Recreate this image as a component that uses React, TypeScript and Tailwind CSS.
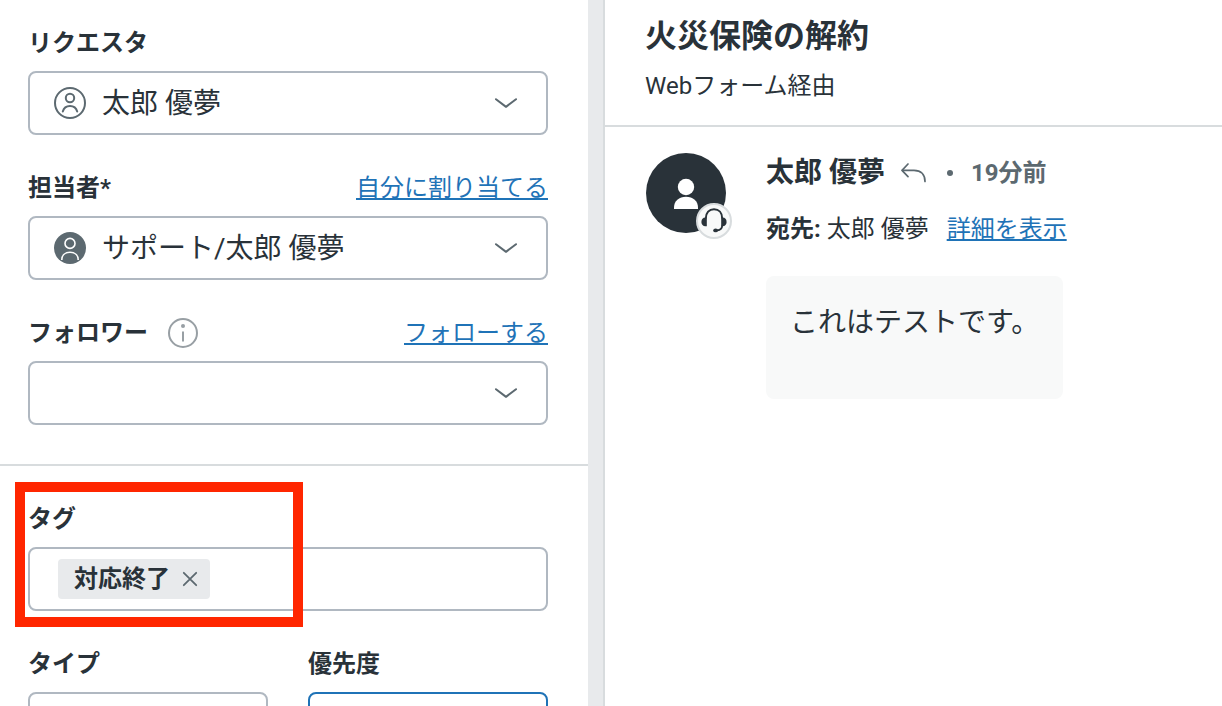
import React from "react";

const ChevronIcon = () => (
  <svg
    className="absolute right-7.5 top-1/2 h-3 w-6 -translate-y-1/2 pointer-events-none"
    viewBox="0 0 24 12"
    fill="none"
    stroke="#5c6970"
    strokeWidth="2"
    strokeLinecap="round"
    strokeLinejoin="round"
  >
    <path d="M2 2.2 L11.4 9.4 Q12 9.9 12.6 9.4 L22 2.2" />
  </svg>
);

const UserOutlineIcon = () => (
  <svg className="w-8 h-8" viewBox="0 0 32 32" fill="none" stroke="#5c6970" strokeWidth="2">
    <circle cx="16" cy="16" r="15" />
    <circle cx="16" cy="11" r="4.2" />
    <path d="M8.8 24.6 C9.8 20.8 12.6 19 16 19 C19.4 19 22.2 20.8 23.2 24.6" strokeLinecap="round" />
  </svg>
);

const UserFilledIcon = () => (
  <svg className="w-8 h-8" viewBox="0 0 32 32" fill="none" stroke="#ffffff" strokeWidth="1.6">
    <circle cx="16" cy="16" r="16" fill="#5c6970" stroke="none" />
    <circle cx="16" cy="11.4" r="5" />
    <path d="M7.8 28 C7.8 23 11.4 20.2 16 20.2 C20.6 20.2 24.2 23 24.2 28" />
  </svg>
);

const InfoIcon = () => (
  <svg className="w-[30px] h-[30px]" viewBox="0 0 30 30" fill="none" stroke="#989fa4" strokeWidth="2">
    <circle cx="15" cy="15" r="14" />
    <path d="M15 13.5 V23.5" />
    <circle cx="15" cy="8" r="2" fill="#989fa4" stroke="none" />
  </svg>
);

const HeadsetIcon = () => (
  <svg className="w-8 h-8" viewBox="0 0 32 32" fill="none" stroke="#293239" strokeWidth="2">
    <path d="M7.8 13.5 C7.8 7.6 11.2 4.2 16 4.2 C20.8 4.2 24.2 7.6 24.2 13.5" />
    <path d="M8.8 12.6 V21.2 H7.4 C5 21.2 3.4 19.4 3.4 16.9 C3.4 14.4 5 12.6 7.4 12.6 Z" fill="#293239" stroke="none" />
    <path d="M23.2 12.6 V21.2 H24.6 C27 21.2 28.6 19.4 28.6 16.9 C28.6 14.4 27 12.6 24.6 12.6 Z" fill="#293239" stroke="none" />
    <path d="M24.2 20.5 C24.2 23.8 21.5 25.4 18 25.4" strokeWidth="1.8" />
    <ellipse cx="17.6" cy="25.4" rx="2.4" ry="1.9" fill="#293239" stroke="none" />
  </svg>
);

interface FieldProps {
  id: string;
  label: string;
  value?: string;
  icon?: React.ReactNode;
  info?: boolean;
  action?: string;
  active?: boolean;
}

const ActionLink = ({ text }: { text: string }) => (
  <a
    href="#"
    className="text-2xl leading-10 text-[#1f73b7] underline decoration-2 underline-offset-2 [text-decoration-skip-ink:none]"
  >
    {text}
  </a>
);

const SelectField = ({ id, label, value, icon, info, action, active }: FieldProps) => (
  <div className="flex flex-col gap-y-2">
    <div className="flex items-center justify-between h-10">
      <div className="flex items-center gap-x-5">
        <label htmlFor={id} className="text-2xl font-bold leading-10">
          {label}
        </label>
        {info && (
          <button type="button" aria-label={label}>
            <InfoIcon />
          </button>
        )}
      </div>
      {action && <ActionLink text={action} />}
    </div>
    <div className="relative">
      {icon && (
        <span className="absolute left-[26px] top-1/2 -translate-y-1/2 pointer-events-none">{icon}</span>
      )}
      <select
        id={id}
        className={
          active
            ? "block w-full h-16 appearance-none rounded-lg border-2 border-[#1f73b7] bg-white pl-[72px] pr-16 pt-0.5 text-[28px]"
            : "block w-full h-16 appearance-none rounded-lg border-2 border-[#b0b8c1] bg-white pl-[72px] pr-16 pt-0.5 text-[28px]"
        }
      >
        <option>{value}</option>
      </select>
      <ChevronIcon />
    </div>
  </div>
);

const TagField = () => (
  <div className="relative flex flex-col gap-y-2">
    <div className="flex items-center h-10">
      <label htmlFor="tags" className="text-2xl font-bold leading-10">
        タグ
      </label>
    </div>
    <div className="flex items-center h-16 rounded-lg border-2 border-[#b0b8c1] bg-white px-7">
      <span className="flex items-center h-10 gap-x-3 rounded bg-[#e8eaec] pl-4 pr-3">
        <span className="text-2xl font-bold leading-10 whitespace-nowrap">対応終了</span>
        <button type="button" aria-label="対応終了">
          <svg className="w-4 h-4" viewBox="0 0 16 16" fill="none" stroke="#5c6970" strokeWidth="1.8" strokeLinecap="round">
            <path d="M1.8 1.8 L14.2 14.2 M14.2 1.8 L1.8 14.2" />
          </svg>
        </button>
      </span>
      <input id="tags" type="text" className="flex-1 h-full min-w-0 text-[28px] outline-none" />
    </div>
    {/* highlight frame over the tag area */}
    <div className="absolute -left-[13px] -top-[17px] -bottom-4 w-72 border-10 border-[#ff2600] pointer-events-none" />
  </div>
);

const Sidebar = () => (
  <aside className="flex-[588_1_0%] min-w-0 bg-white">
    <div className="flex flex-col gap-y-[33px] border-b-2 border-[#d8dcde] pl-7 pr-10 pt-[23px] pb-[39px]">
      <SelectField id="requester" label="リクエスタ" value="太郎 優夢" icon={<UserOutlineIcon />} />
      <SelectField
        id="assignee"
        label="担当者*"
        value="サポート/太郎 優夢"
        icon={<UserFilledIcon />}
        action="自分に割り当てる"
      />
      <SelectField id="follower" label="フォロワー" info action="フォローする" />
    </div>
    <div className="flex flex-col gap-y-[33px] pl-7 pr-10 pt-[33px]">
      <TagField />
      <div className="grid grid-cols-2 gap-x-10">
        <SelectField id="type" label="タイプ" />
        <SelectField id="priority" label="優先度" active />
      </div>
    </div>
  </aside>
);

const Avatar = () => (
  <div className="relative w-20 h-20 shrink-0">
    <svg className="w-20 h-20" viewBox="0 0 80 80">
      <circle cx="40" cy="40" r="40" fill="#293239" />
      <circle cx="40" cy="34" r="8.2" fill="#ffffff" />
      <path d="M28 56 V54.5 C28 48 33 43.8 40 43.8 C47 43.8 52 48 52 54.5 V56 Z" fill="#ffffff" />
    </svg>
    <span className="absolute -right-1.5 -bottom-1.5 flex w-9 h-9 rounded-full border-2 border-[#d8dcde] bg-[#f8f9f9]">
      <HeadsetIcon />
    </span>
  </div>
);

const Conversation = () => (
  <main className="flex-[617_1_0%] min-w-0 bg-white">
    <header className="flex flex-col gap-y-2 border-b-2 border-[#d8dcde] px-10 pt-3 pb-[21px]">
      <h1 className="text-[32px] font-bold leading-12">火災保険の解約</h1>
      <p className="text-2xl leading-9">Webフォーム経由</p>
    </header>
    <article className="flex gap-x-10 px-[41px] pt-[26px]">
      <Avatar />
      <div className="flex flex-col items-start">
        <div className="flex items-center h-10 gap-x-5">
          <div className="flex items-center gap-x-4">
            <span className="text-[28px] font-bold leading-10">太郎 優夢</span>
            <button type="button" aria-label="返信">
              <svg className="h-5 w-[26px]" viewBox="0 0 26 20" fill="none" stroke="#5c6970" strokeWidth="1.7" strokeLinecap="round" strokeLinejoin="round">
                <path d="M7 1 L1 7.3 L7 13.6" />
                <path d="M1.6 7.3 H13 C20 7.3 24 11.5 24 18.5" />
              </svg>
            </button>
          </div>
          <div className="flex items-center gap-x-[18px]">
            <span className="w-1.5 h-1.5 rounded-full bg-[#5c6970]" />
            <time className="text-2xl font-bold leading-10 text-[#5c6970]">19分前</time>
          </div>
        </div>
        <div className="flex items-center h-10 mt-4 gap-x-[18px]">
          <p className="text-2xl leading-10">
            <strong className="font-bold">宛先:</strong> 太郎 優夢
          </p>
          <ActionLink text="詳細を表示" />
        </div>
        <p className="mt-[27px] rounded-lg bg-[#f8f9f9] px-6 pt-[26px] pb-[55px] text-[28px] leading-[42px]">
          これはテストです。
        </p>
      </div>
    </article>
  </main>
);

const App = () => {
  return (
    <div className="flex h-screen overflow-hidden bg-white text-[#293239] font-[Roboto,'Noto_Sans_CJK_JP',sans-serif]">
      <Sidebar />
      <div className="w-[17px] shrink-0 border-r-2 border-[#d8dcde] bg-[#e8eaec]" />
      <Conversation />
    </div>
  );
};

export default App;
